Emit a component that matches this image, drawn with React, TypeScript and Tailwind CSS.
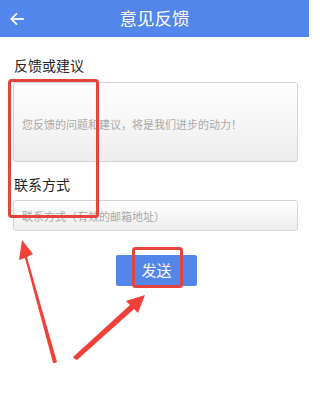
import { useState } from "react";

function BackArrow() {
  return (
    <svg width="16" height="16" viewBox="0 0 24 24" fill="none" stroke="white" strokeWidth="2.6" strokeLinecap="square">
      <path d="M21 12H4" />
      <path d="M11 4.5L3.5 12l7.5 7.5" />
    </svg>
  );
}

function Annotations() {
  return (
    <svg className="pointer-events-none absolute inset-0" width="309" height="399" viewBox="0 0 309 399">
      <rect x="9.5" y="80.5" width="88" height="136" rx="2" fill="none" stroke="#e8423c" strokeWidth="3" />
      <rect x="133.5" y="248.5" width="48" height="38" rx="2" fill="none" stroke="#e8423c" strokeWidth="3" />
      {/* arrow pointing up-left */}
      <polygon points="55,363 53,363 25,258 19,260 22,240 33,254 27,257 57,362" fill="#f0403a" />
      {/* arrow pointing to button */}
      <polygon points="75,359 73,357 130,305 126,301 145,295 138,313 134,309 77,360" fill="#f0403a" />
    </svg>
  );
}

export default function App() {
  const [feedback, setFeedback] = useState("");
  const [contact, setContact] = useState("");

  return (
    <div
      className="relative w-[309px] h-[399px] bg-white overflow-hidden"
      style={{ fontFamily: '"Noto Sans CJK SC", "Noto Sans", sans-serif' }}
    >
      <div className="h-[37px] bg-[#5386ea] flex items-center relative">
        <div className="pl-[9px] flex items-center"><BackArrow /></div>
        <p className="absolute inset-0 flex items-center justify-center text-white text-[17.5px]">意见反馈</p>
      </div>

      <div className="px-[13px]">
        <p className="mt-[17px] text-[14px] leading-[22px] text-[#222] pl-[1px]">反馈或建议</p>
        <textarea
          value={feedback}
          onChange={(e) => setFeedback(e.target.value)}
          placeholder="您反馈的问题和建议，将是我们进步的动力！"
          className="mt-[6px] w-[285px] h-[80px] resize-none border border-[#d4d4d4] rounded-[3px] bg-gradient-to-b from-white to-[#ededed] px-[8px] pt-[34px] text-[11px] leading-[14px] text-[#333] placeholder:text-[#a8a8a8] outline-none"
        />
        <p className="mt-[6px] text-[14px] leading-[22px] text-[#222] pl-[1px]">联系方式</p>
        <input
          value={contact}
          onChange={(e) => setContact(e.target.value)}
          placeholder="联系方式（有效的邮箱地址）"
          className="mt-[5px] w-[285px] h-[31px] border border-[#d4d4d4] rounded-[3px] bg-gradient-to-b from-white to-[#ededed] px-[8px] text-[11px] text-[#333] placeholder:text-[#a8a8a8] outline-none"
        />
        <div className="flex justify-center mt-[24px]">
          <button className="w-[81px] h-[31px] bg-[#5386ea] rounded-[2px] text-white text-[15px] ml-[4px]">发送</button>
        </div>
      </div>

      <Annotations />
    </div>
  );
}
